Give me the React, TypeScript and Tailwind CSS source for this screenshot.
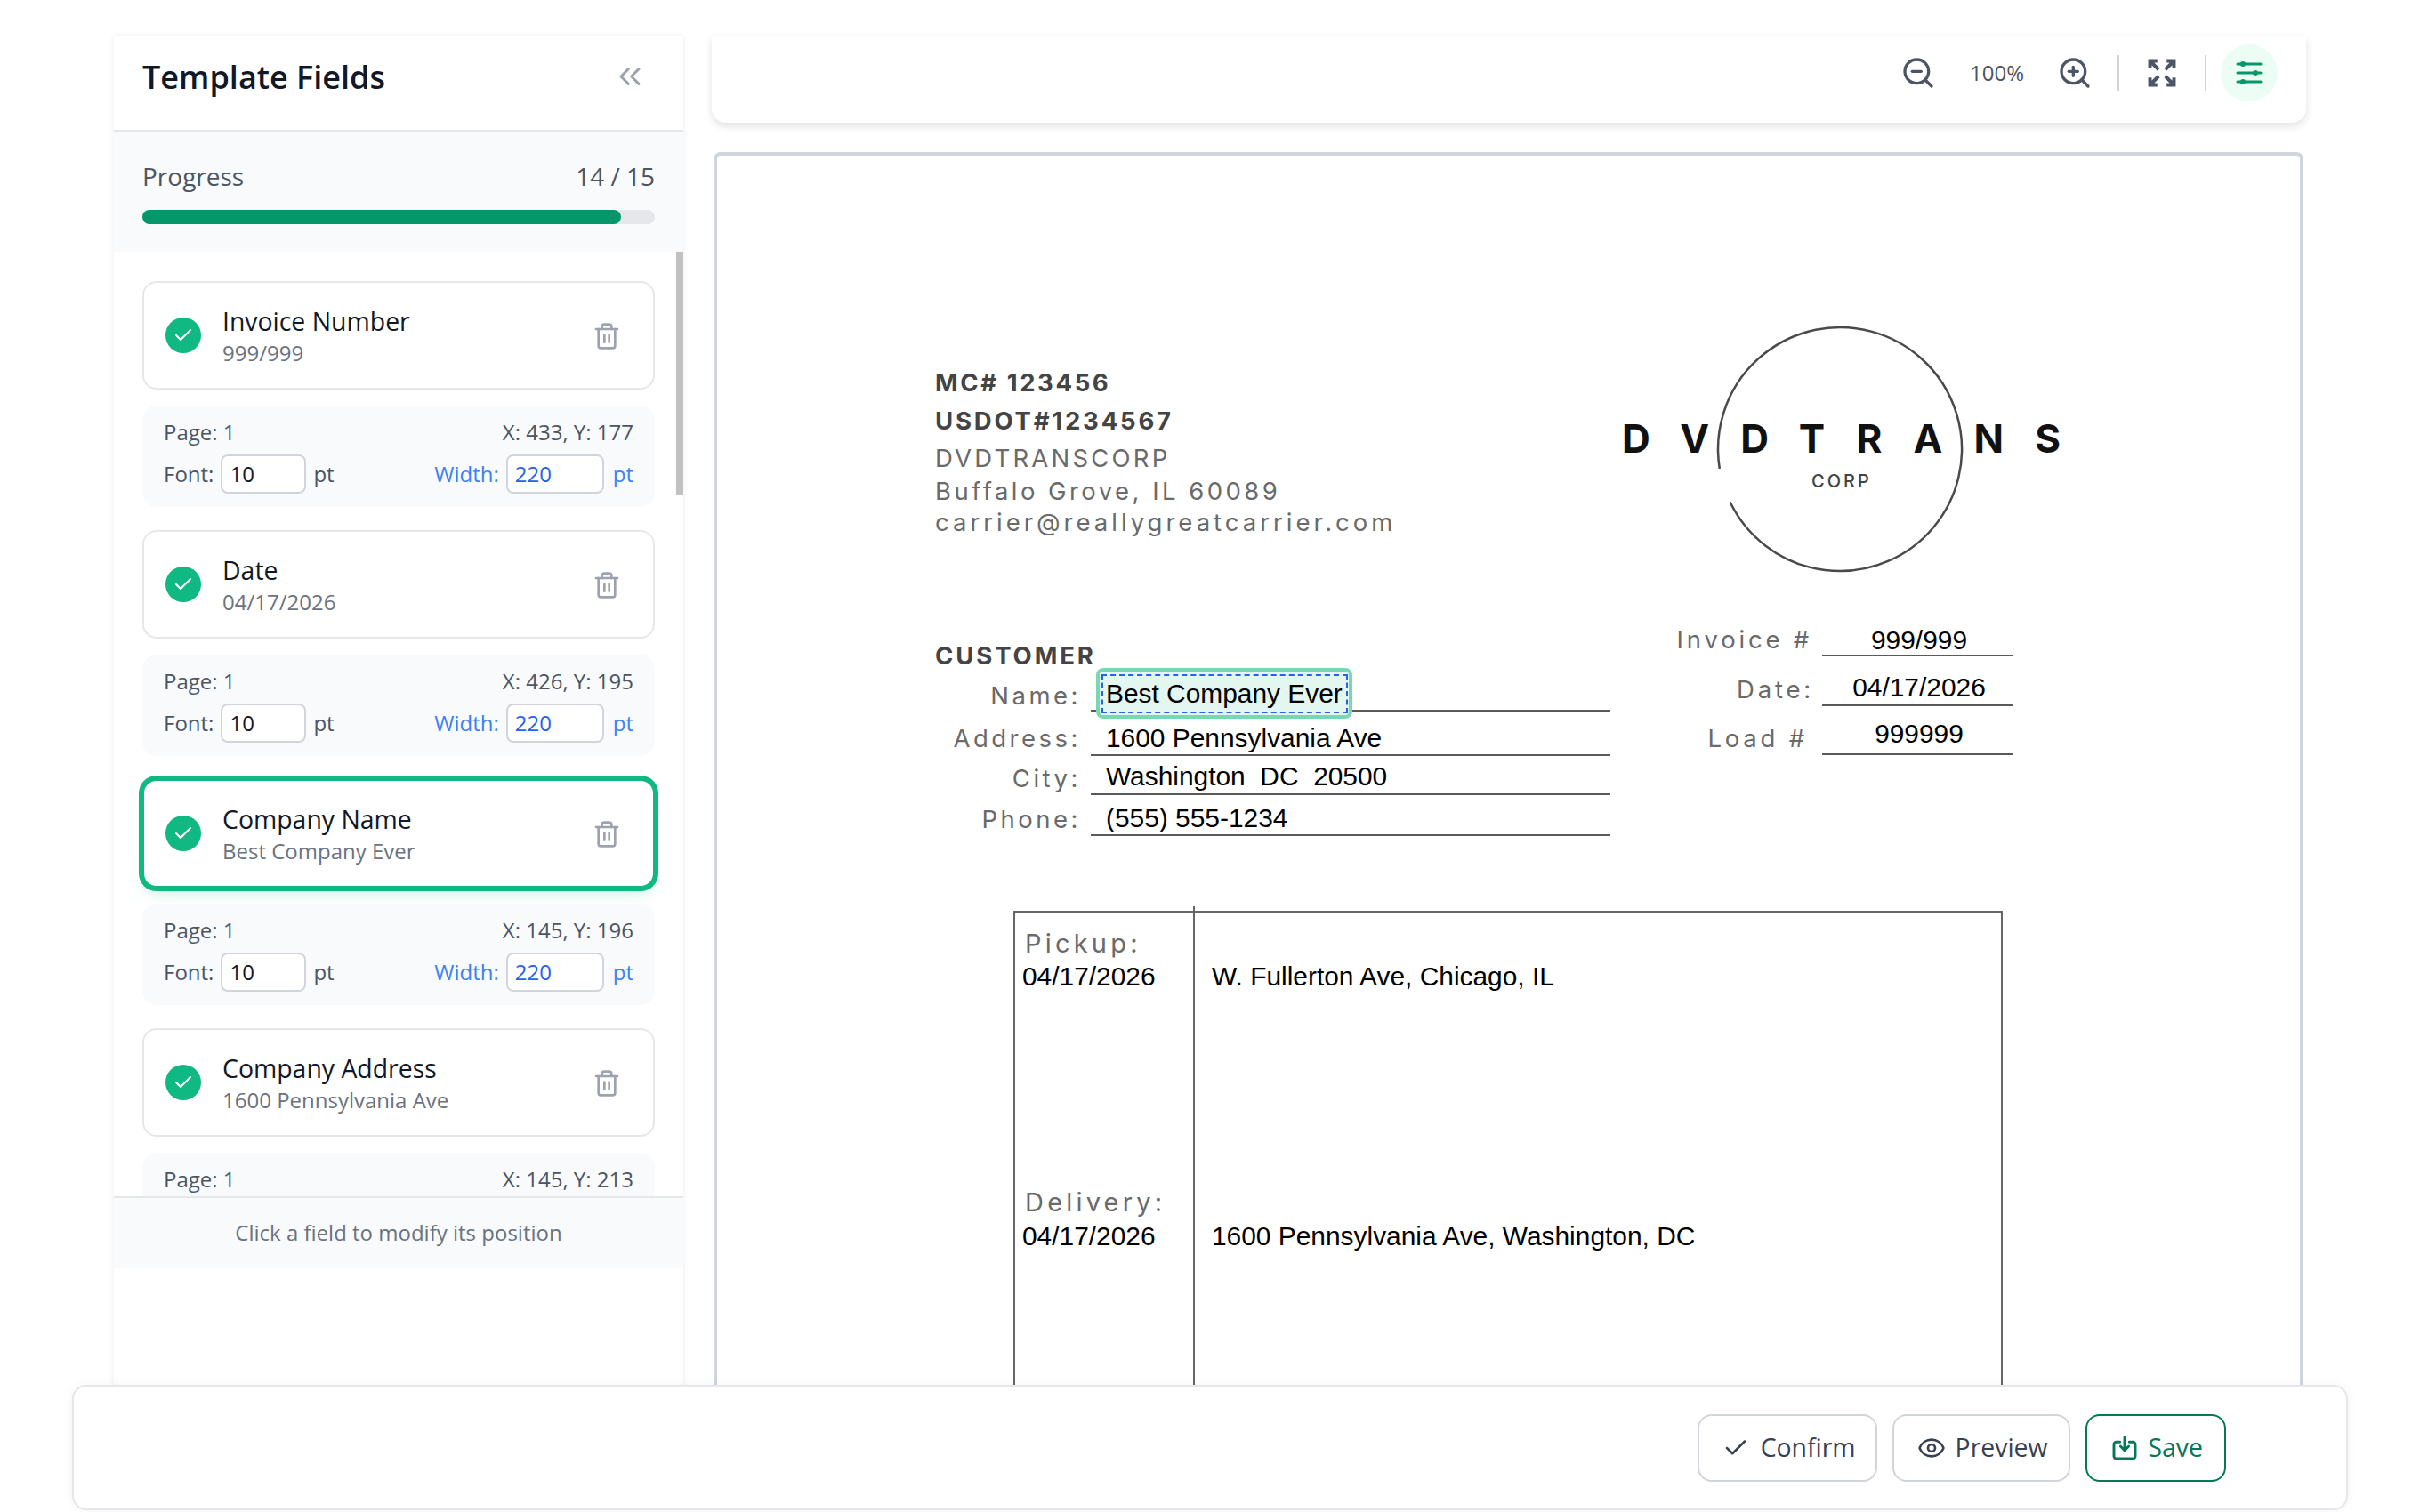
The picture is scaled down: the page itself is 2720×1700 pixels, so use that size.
import React from 'react';
import { Check, ChevronsLeft, Eye, Trash2, ZoomIn, ZoomOut } from 'lucide-react';

interface Field {
  name: string;
  value: string;
  x: number;
  y: number;
  selected?: boolean;
}

const fields: Field[] = [
  { name: 'Invoice Number', value: '999/999', x: 433, y: 177 },
  { name: 'Date', value: '04/17/2026', x: 426, y: 195 },
  { name: 'Company Name', value: 'Best Company Ever', x: 145, y: 196, selected: true },
  { name: 'Company Address', value: '1600 Pennsylvania Ave', x: 145, y: 213 },
];

const customerRows = [
  { label: 'Name:', value: 'Best Company Ever', row: 'relative flex h-[40px]', labelClass: 'pt-[2px]' },
  { label: 'Address:', value: '1600 Pennsylvania Ave', row: 'mt-[10px] flex h-[40px]', labelClass: '' },
  { label: 'City:', value: 'Washington  DC  20500', row: 'mt-[3px] flex h-[41px]', labelClass: 'pt-[2px]' },
  { label: 'Phone:', value: '(555) 555-1234', row: 'mt-[6px] flex h-[40px]', labelClass: 'pt-px' },
];

const invoiceRows = [
  { label: 'Invoice #', value: '999/999', row: 'flex h-[39px]', labelClass: 'pr-[11px]', valueClass: 'pt-px' },
  { label: 'Date:', value: '04/17/2026', row: 'mt-[15px] flex h-[41px]', labelClass: 'pr-[9px] pt-[2px]', valueClass: '' },
  { label: 'Load #', value: '999999', row: 'mt-[11px] flex h-[44px]', labelClass: 'pr-4 pt-[5px]', valueClass: '' },
];

function FieldItem({ field }: { field: Field }) {
  return (
    <div className="mb-[26px]">
      <div
        className={
          field.selected
            ? 'flex h-[122px] items-center rounded-2xl border-2 border-[#10b981] bg-white pl-6 pr-[36px] ring-4 ring-[#10b981] shadow-lg shadow-emerald-500/20'
            : 'flex h-[122px] items-center rounded-2xl border-2 border-[#e5e7eb] bg-white pl-6 pr-[36px]'
        }
      >
        <div className="flex h-10 w-10 shrink-0 items-center justify-center rounded-full bg-[#10b981]">
          <Check size={24} color="#ffffff" strokeWidth={2} />
        </div>
        <div className="ml-6 flex-1 pt-[2px]">
          <div className="text-[28.4px] leading-[36px] font-medium text-[#111827]">{field.name}</div>
          <div className="mt-[2px] text-[24px] leading-[32px] text-[#6b7280]">{field.value}</div>
        </div>
        <Trash2 className="mt-[2px]" size={32} color="#9ca3af" strokeWidth={2} />
      </div>
      <div className="mt-[18px] h-[114px] rounded-2xl bg-[#f9fafb] px-6 pt-[14px] text-[24px] leading-[32px] text-[#4b5563]">
        <div className="flex justify-between">
          <span>Page: 1</span>
          <span>
            X: {field.x}, Y: {field.y}
          </span>
        </div>
        <div className="mt-[9px] flex items-center justify-between">
          <div className="flex items-center">
            <span>Font:</span>
            <div className="ml-2 h-11 w-24 rounded-lg border-2 border-[#d1d5db] bg-white pl-2 leading-[40px] text-[#111827]">10</div>
            <span className="ml-2">pt</span>
          </div>
          <div className="flex items-center text-[#3b82f6]">
            <span>Width:</span>
            <div className="ml-2 h-11 w-[110px] rounded-lg border-2 border-[#d1d5db] bg-white pl-2 leading-[40px] text-[#2563eb]">220</div>
            <span className="ml-[10px]">pt</span>
          </div>
        </div>
      </div>
    </div>
  );
}

function Sidebar() {
  return (
    <div className="h-[1640px] w-[640px] shrink-0 bg-white shadow-[0_0_6px_rgba(0,0,0,0.08)]">
      <div className="flex h-[108px] items-center justify-between border-b-2 border-[#e5e7eb] pb-3 pl-8 pr-[40px]">
        <h1 className="text-[36px] leading-[48px] font-semibold text-[#111827]">Template Fields</h1>
        <ChevronsLeft className="mb-[2px]" size={40} color="#9ca3af" strokeWidth={1.8} />
      </div>

      <div className="h-[135px] bg-[#f9fafb] px-8 pt-[30px]">
        <div className="flex justify-between text-[28px] leading-[40px] text-[#4b5563]">
          <span>Progress</span>
          <span>14 / 15</span>
        </div>
        <div className="mt-[18px] h-4 rounded-full bg-[#e5e7eb]">
          <div className="h-4 w-[538px] rounded-full bg-[#059669]"></div>
        </div>
      </div>

      <div className="relative h-[1062px] overflow-hidden px-8 pt-[33px]">
        {fields.map((field) => (
          <FieldItem key={field.name} field={field} />
        ))}
        <div className="absolute right-0 top-0 h-[274px] w-2 bg-[#c1c1c1]"></div>
      </div>

      <div className="flex h-[81px] items-center justify-center border-t-2 border-[#e5e7eb] bg-[#f9fafb] pb-[2px] text-[24px] text-[#6b7280]">
        Click a field to modify its position
      </div>
    </div>
  );
}

function Toolbar() {
  return (
    <div className="flex h-[98px] items-center justify-end rounded-b-2xl bg-white pb-[14px] pr-8 shadow-[0_4px_10px_rgba(0,0,0,0.12)]">
      <ZoomOut size={40} color="#4b5563" strokeWidth={2} />
      <span className="mx-[38px] w-[60px] text-[24px] text-[#4b5563]">100%</span>
      <ZoomIn size={40} color="#4b5563" strokeWidth={2} />
      <div className="ml-7 h-10 w-0.5 bg-[#d1d5db]"></div>
      <svg className="ml-[30px]" width="36" height="36" viewBox="0 0 24 24" fill="none" stroke="#4b5563" strokeWidth="2.6" strokeLinecap="butt" strokeLinejoin="miter">
        <path d="M3 8.5V3h5.5M3 3l6.5 6.5" />
        <path d="M21 8.5V3h-5.5M21 3l-6.5 6.5" />
        <path d="M3 15.5V21h5.5M3 21l6.5-6.5" />
        <path d="M21 15.5V21h-5.5M21 21l-6.5-6.5" />
      </svg>
      <div className="ml-[30px] h-10 w-0.5 bg-[#d1d5db]"></div>
      <div className="ml-4 flex h-16 w-16 items-center justify-center rounded-full bg-[#ecfdf5]">
        <svg width="32" height="28" viewBox="0 0 32 28" fill="#059669" stroke="#059669" strokeWidth="3" strokeLinecap="round">
          <path d="M3 4h26M3 14h26M3 24h26" fill="none" />
          <circle cx="9" cy="4" r="1.5" />
          <circle cx="23" cy="14" r="1.5" />
          <circle cx="9" cy="24" r="1.5" />
        </svg>
      </div>
    </div>
  );
}

function InvoiceHeader() {
  return (
    <div className="flex">
      <div className="w-[772px] pt-[45px] font-['Inter',sans-serif] text-[27.5px] leading-[40px] text-[#6a6a6a]">
        <div className="h-[43px] font-bold tracking-[2.6px] text-[#444444]">MC# 123456</div>
        <div className="h-[42px] font-bold tracking-[2.8px] text-[#444444]">USDOT#1234567</div>
        <div className="h-[37px] tracking-[3.2px]">DVDTRANSCORP</div>
        <div className="h-[35px] tracking-[3.45px]">Buffalo Grove, IL 60089</div>
        <div className="tracking-[4px]">carrier@reallygreatcarrier.com</div>
      </div>
      {/* logo */}
      <div className="relative h-[280px] w-[500px] font-['Inter',sans-serif]">
        <svg className="absolute left-[105px] top-0" width="280" height="280" viewBox="0 0 280 280" fill="none" stroke="#4a4a4a" strokeWidth="2.5">
          <path d="M4.8 162 A137 137 0 1 1 16.6 199.5" />
        </svg>
        <div className="absolute left-0 top-[100px] whitespace-nowrap text-[44px] leading-[56px] font-bold tracking-[35.2px] text-[#111111]">DVDTRANS</div>
        <div className="absolute left-[213px] top-[164px] text-[20px] leading-[24px] font-medium tracking-[3px] text-[#444444]">CORP</div>
      </div>
    </div>
  );
}

function CustomerBlock() {
  return (
    <div className="mt-[54px] flex">
      <div className="w-[759px] pt-[18px]">
        <div className="h-[43px] font-['Inter',sans-serif] text-[27.5px] leading-[40px] font-bold tracking-[2.9px] text-[#444444]">CUSTOMER</div>
        {customerRows.map((row, i) => (
          <div key={row.label} className={row.row}>
            <div className={"w-[164px] text-right font-['Inter',sans-serif] text-[27.5px] leading-[40px] tracking-[3.5px] text-[#6a6a6a] " + row.labelClass}>{row.label}</div>
            <div className="relative ml-[11px] w-[584px] border-b-2 border-[#5a5a5a] pl-[17px] font-['Liberation_Sans',sans-serif] text-[29.9px] leading-[40px] whitespace-pre text-black">
              {i === 0 && (
                <div className="absolute left-[6px] top-[-9px] h-[57px] w-[288px] rounded-lg border-4 border-[#7ad7b6] bg-[#e4f6f0]">
                  <div className="ml-[2px] mt-[3px] h-[44px] w-[277px] border-2 border-dashed border-[#2563eb]"></div>
                </div>
              )}
              <span className="relative">{row.value}</span>
            </div>
          </div>
        ))}
      </div>
      <div className="ml-[74px]">
        {invoiceRows.map((row) => (
          <div key={row.label} className={row.row}>
            <div className={"w-[164px] text-right font-['Inter',sans-serif] text-[27.5px] leading-[40px] tracking-[3.8px] text-[#6a6a6a] " + row.labelClass}>{row.label}</div>
            <div className={"w-[214px] border-b-2 border-[#5a5a5a] pl-1 text-center font-['Liberation_Sans',sans-serif] text-[29.9px] leading-[40px] text-black " + row.valueClass}>{row.value}</div>
          </div>
        ))}
      </div>
    </div>
  );
}

function StopsTable() {
  const label = "pl-[3px] font-['Inter',sans-serif] text-[29px] leading-[40px] tracking-[4.2px] text-[#6a6a6a]";
  return (
    <div className="relative ml-[88px] mt-[84px] flex h-[760px] w-[1112px] border-2 border-t-[3px] border-[#666666] font-['Liberation_Sans',sans-serif] text-[29.9px] leading-[40px] text-black">
      <div className="w-[202px] border-r-2 border-[#666666] pl-2 pt-[14px]">
        <div className={label + ' h-[37px]'}>Pickup:</div>
        <div className="h-[254px]">04/17/2026</div>
        <div className={label + ' h-[38px]'}>Delivery:</div>
        <div>04/17/2026</div>
      </div>
      <div className="pl-[19px] pt-[51px]">
        <div className="h-[292px]">W. Fullerton Ave, Chicago, IL</div>
        <div>1600 Pennsylvania Ave, Washington, DC</div>
      </div>
      <div className="absolute left-[200px] top-[-8px] h-[5px] w-0.5 bg-[#666666]"></div>
    </div>
  );
}

function InvoicePage() {
  return (
    <div className="ml-[2px] mr-[3px] mt-[33px] h-[1600px] rounded-lg border-4 border-[#d1d5db] bg-white pl-[245px] pt-[190px]">
      <InvoiceHeader />
      <CustomerBlock />
      <StopsTable />
    </div>
  );
}

function ActionBar() {
  return (
    <div className="absolute bottom-[2px] left-[81px] right-[81px] flex h-[141px] items-center justify-end gap-[17px] rounded-2xl border-2 border-[#e5e7eb] bg-white pr-[135px] text-[28.4px] font-medium shadow-[0_0_12px_rgba(0,0,0,0.05)]">
      <button className="flex h-[76px] items-center gap-[13px] rounded-2xl border-2 border-[#d1d5db] pl-[26px] pr-[22px] text-[#374151]">
        <Check size={30} strokeWidth={2} />
        Confirm
      </button>
      <button className="flex h-[76px] items-center gap-[11px] rounded-2xl border-2 border-[#d1d5db] pl-[26px] pr-[23px] text-[#374151]">
        <Eye size={32} strokeWidth={2} />
        Preview
      </button>
      <button className="flex h-[76px] items-center gap-[11px] rounded-2xl border-2 border-[#047857] pl-[26px] pr-6 text-[#047857]">
        <svg width="32" height="32" viewBox="0 0 24 24" fill="none" stroke="#047857" strokeWidth="2.2" strokeLinecap="round" strokeLinejoin="round">
          <path d="M8 7H5a2 2 0 0 0-2 2v10a2 2 0 0 0 2 2h14a2 2 0 0 0 2-2V9a2 2 0 0 0-2-2h-3" />
          <path d="M12 3v11M8.5 10.5 12 14l3.5-3.5" />
        </svg>
        Save
      </button>
    </div>
  );
}

export default function App() {
  return (
    <div className="relative h-[1700px] w-[2720px] overflow-hidden bg-white font-['Open_Sans',sans-serif]">
      <div className="h-[1690px] overflow-hidden">
        <div className="flex items-start gap-8 pl-[128px] pr-[128px] pt-[40px]">
          <Sidebar />
          <div className="min-w-0 flex-1">
            <Toolbar />
            <InvoicePage />
          </div>
        </div>
      </div>
      <ActionBar />
    </div>
  );
}
